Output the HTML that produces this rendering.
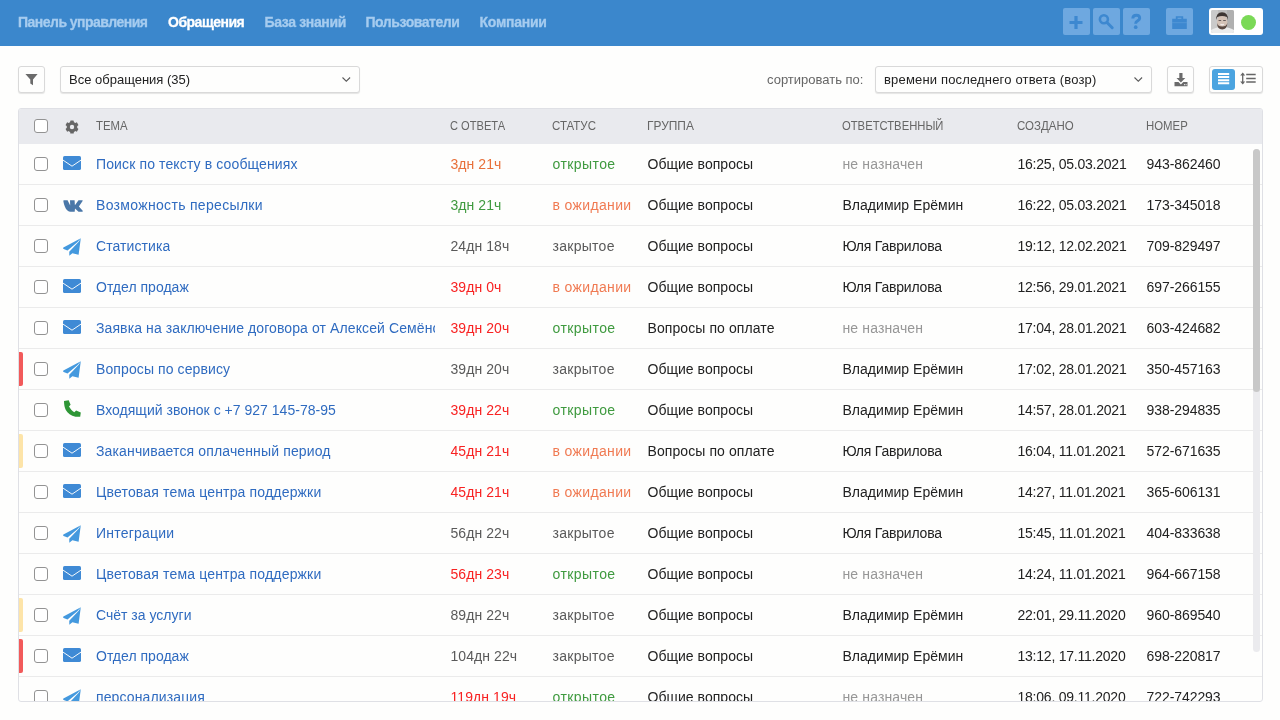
<!DOCTYPE html>
<html><head><meta charset="utf-8">
<style>
*{box-sizing:border-box;margin:0;padding:0}
html,body{width:1280px;height:720px;overflow:hidden;background:#fefefd;font-family:"Liberation Sans",sans-serif;color:#333}
.nav{position:absolute;left:0;top:0;width:1280px;height:46px;background:#3b87cc}
.nav a{position:absolute;top:14px;font-weight:bold;font-size:14px;color:#a6ccef;-webkit-text-stroke:0.3px currentColor;text-decoration:none;white-space:nowrap;line-height:16px;letter-spacing:-0.35px}
.nav a.act{color:#fff}
.nbtn{position:absolute;top:8px;width:27px;height:27px;border-radius:2px;background:#6ea8e0}
.nbtn svg{position:absolute;left:0;top:0}
.avbox{position:absolute;left:1209px;top:8px;width:54px;height:27px;background:#fff;border-radius:3px}
.tb{position:absolute;top:66px;height:27px;border:1px solid #d9d9d9;border-radius:3px;background:#fefefd;box-shadow:0 1px 1px rgba(0,0,0,.10)}
.sel{font-size:13px;color:#222;line-height:25px;padding-left:8px;white-space:nowrap}
.tb svg{position:absolute}
.tbl{position:absolute;left:18px;top:108px;width:1245px;height:594px;border:1px solid #dfe0e5;border-radius:3px;overflow:hidden;background:#fefefd}
.th{position:absolute;left:0;top:0;width:1245px;height:35px;background:#e9eaee}
.th span{position:absolute;top:10px;font-size:12.5px;color:#666;line-height:14px;white-space:nowrap;transform:scaleX(0.91);transform-origin:0 0}
.row{position:absolute;left:0;width:1243px;height:41px;border-bottom:1px solid #ebebeb}
.row span{position:absolute;top:12px;font-size:14px;line-height:16px;white-space:nowrap}
.cb{position:absolute;left:15px;width:14px;height:14px;border:1.5px solid #939393;border-radius:3px;background:#fff}
.row .cb{top:13px}
.ic{position:absolute}
.t{left:77px;color:#2f6bc0;max-width:339px;overflow:hidden}
.mk{position:absolute;left:0;top:3px;width:4px;height:34px;border-radius:0 2px 2px 0}
.mk.red{background:#f25a5a}
.mk.yel{background:#fde4a8}
.scr{position:absolute;left:1234px;top:40px;width:7px;height:243px;border-radius:3.5px;background:#c8c8c8}
body>div{will-change:transform}
</style></head><body>
<div class="nav">
<a style="left:18px;letter-spacing:-0.52px">Панель управления</a>
<a class="act" style="left:168px;letter-spacing:-0.5px">Обращения</a>
<a style="left:264.5px">База знаний</a>
<a style="left:365.5px;letter-spacing:-0.45px">Пользователи</a>
<a style="left:479.5px;letter-spacing:-0.25px">Компании</a>
<div class="nbtn" style="left:1063px"><svg width="27" height="27" viewBox="0 0 27 27"><path fill="#3d88d0" d="M11.4 8h3.2v13h-3.2z M6.5 12.9h13v3.2h-13z"/></svg></div>
<div class="nbtn" style="left:1093px"><svg width="27" height="27" viewBox="0 0 27 27"><circle cx="10.9" cy="11.3" r="4" fill="none" stroke="#3d88d0" stroke-width="2.6"/><path d="M14 14.5l5.2 5.2" stroke="#3d88d0" stroke-width="3" stroke-linecap="round"/></svg></div>
<div class="nbtn" style="left:1123px"><svg width="27" height="27" viewBox="0 0 27 27"><path fill="none" stroke="#3d88d0" stroke-width="2.9" d="M9.8 10.6c0-2.1 1.5-3.3 3.5-3.3 2.1 0 3.4 1.2 3.4 2.9 0 2.4-4 2.6-4 5.1v.5"/><circle cx="12.7" cy="19.2" r="1.85" fill="#3d88d0"/></svg></div>
<div class="nbtn" style="left:1166px"><svg width="27" height="27" viewBox="0 0 27 27"><path fill="#3d88d0" d="M9.8 8.2h7.4v2.6h-1.8v-1h-3.8v1H9.8z M6.2 10.8h14.6v10.1H6.2z"/><rect x="6.2" y="14.5" width="14.6" height="0.6" fill="#6ea8e0" opacity="0.7"/></svg></div>
<div class="avbox"><svg style="position:absolute;left:2px;top:2px" width="23" height="23" viewBox="0 0 23 23"><defs><clipPath id="avc"><rect width="23" height="23" rx="2"/></clipPath><filter id="bl" x="-10%" y="-10%" width="120%" height="120%"><feGaussianBlur stdDeviation="0.55"/></filter></defs><g clip-path="url(#avc)"><rect width="23" height="23" fill="#bdbdbd"/><g filter="url(#bl)"><rect x="-2" y="-2" width="9" height="27" fill="#cacaca"/><rect x="16" y="-2" width="9" height="27" fill="#b0b0b0"/><path d="M-2 25 L0 20 Q5 17 11.5 17 Q18 17 23 20 L25 25Z" fill="#ececec"/><ellipse cx="11.2" cy="12" rx="5.2" ry="6.8" fill="#d4c2b6"/><path d="M5.2 10 Q5 2.5 11 2.3 Q17.2 2.5 17 10 L16 7 Q11 5 6.3 7Z" fill="#3e3430"/><path d="M6 13 Q6.3 19.5 11.2 19.5 Q16 19.5 16.4 13 Q15.5 16.5 11.2 16.5 Q7 16.5 6 13Z" fill="#5a4a42"/><path d="M7.6 10.5h2.6M12.2 10.5h2.6" stroke="#5a5050" stroke-width="0.9"/><path d="M9.5 14.3 Q11.2 15.4 12.9 14.3" stroke="#f4eeee" stroke-width="1.1" fill="none"/></g></g></svg><div style="position:absolute;left:32px;top:6.5px;width:15px;height:15px;border-radius:50%;background:#7ad956"></div></div></div>
</div>
<div class="tb" style="left:18px;width:27px"><svg style="left:6px;top:6px" width="13" height="13" viewBox="0 0 13 13"><path fill="#6b6b6b" d="M0.4 1h12.2L8 6.6v5.6L5.3 10.6V6.6z"/></svg></div>
<div class="tb sel" style="left:60px;width:300px">Все обращения (35)<svg style="left:281px;top:10px" width="9" height="6" viewBox="0 0 9 6"><path d="M0.5 0.5l3.8 3.7 3.8-3.7" fill="none" stroke="#5a5a5a" stroke-width="1.05"/></svg></div>
<div style="position:absolute;left:767px;top:72px;font-size:13px;color:#666;line-height:15px">сортировать по:</div>
<div class="tb sel" style="left:875px;width:277px;letter-spacing:0.17px">времени последнего ответа (возр)<svg style="left:258px;top:10px" width="9" height="6" viewBox="0 0 9 6"><path d="M0.5 0.5l3.8 3.7 3.8-3.7" fill="none" stroke="#5a5a5a" stroke-width="1.05"/></svg></div>
<div class="tb" style="left:1167px;width:27px"><svg style="left:5px;top:5px" width="16" height="15" viewBox="0 0 16 15"><path fill="#6b6b6b" d="M6.3 1h3.2v5h2.8L7.9 10.4 3.5 6h2.8z M1.5 10h4l2.4 2.4L10.3 10h4.2v4.2h-13z"/><rect x="11" y="12.2" width="1" height="1" fill="#fff"/><rect x="12.6" y="12.2" width="1" height="1" fill="#fff"/></svg></div>
<div class="tb" style="left:1209px;width:54px"><div style="position:absolute;left:2px;top:2px;width:23px;height:21px;border-radius:3px;background:#4ba4e0"></div><svg style="left:8px;top:6px" width="12" height="12" viewBox="0 0 12 12"><path d="M0 1h11.2M0 4.1h11.2M0 7.2h11.2M0 10.2h11.2" stroke="#fff" stroke-width="2"/></svg><svg style="left:30px;top:5px" width="18" height="14" viewBox="0 0 18 14"><path d="M6.2 2.5h9.5M6.2 6.4h9.5M6.2 10.1h9.5" stroke="#666" stroke-width="1.5"/><path d="M2.7 1.5v10" stroke="#666" stroke-width="1.3"/><path d="M0.2 3.6L2.7 0.4l2.5 3.2zM0.2 9.4L2.7 12.6l2.5-3.2z" fill="#666"/></svg></div>
<div class="tbl">
<div class="th">
<div class="cb" style="top:10px"></div>
<svg class="ic" style="left:46px;top:11px" width="14" height="14" viewBox="0 0 14 14"><g fill="#666" transform="translate(7 7)"><rect x="-1.8" y="-6.6" width="3.6" height="13.2" rx="0.7"/><rect x="-1.8" y="-6.6" width="3.6" height="13.2" rx="0.7" transform="rotate(60)"/><rect x="-1.8" y="-6.6" width="3.6" height="13.2" rx="0.7" transform="rotate(120)"/><circle r="5.3"/><circle r="2.2" fill="#e9eaee"/></g></svg>
<span style="left:77px">ТЕМА</span>
<span style="left:431px;transform:scaleX(0.888)">С ОТВЕТА</span>
<span style="left:533px;transform:scaleX(0.92)">СТАТУС</span>
<span style="left:628px;transform:scaleX(0.955)">ГРУППА</span>
<span style="left:823px;transform:scaleX(0.9)">ОТВЕТСТВЕННЫЙ</span>
<span style="left:998px;transform:scaleX(0.92)">СОЗДАНО</span>
<span style="left:1127px">НОМЕР</span>
</div>
<div class="row" style="top:35px"><div class="cb"></div><svg class="ic" style="left:44px;top:12px" width="18" height="14" viewBox="0 0 18 14"><rect width="18" height="14" rx="1.6" fill="#3f8ad5"/><path d="M0 4.1L9 10.2 18 4.1" fill="none" stroke="#fefefd" stroke-width="0.95"/></svg><span class="t" style="letter-spacing:0.126px">Поиск по тексту в сообщениях</span><span style="left:431.5px;letter-spacing:0.07px;color:#e8703a">3дн 21ч</span><span style="left:533.5px;letter-spacing:0.42px;color:#3f9a3f">открытое</span><span style="left:628.5px;letter-spacing:0.03px;color:#222">Общие вопросы</span><span style="left:823.5px;letter-spacing:0.13px;color:#979797">не назначен</span><span style="left:998.5px;letter-spacing:-0.23px;color:#222">16:25, 05.03.2021</span><span style="left:1127.5px;letter-spacing:-0.07px;color:#222">943-862460</span></div>
<div class="row" style="top:76px"><div class="cb"></div><svg class="ic" style="left:44px;top:15px" width="20" height="12" viewBox="0 0 20 12"><path fill="#4a77a8" d="M0.3 0.8Q0.3 0.2 1 0.2L4.6 0.2L7.2 5.6L7 0.2L11.6 0.2L11.9 5.2L15.5 0.2L19.3 0.2Q19.9 0.3 19.6 1L15.9 6.4L19.7 10.8Q20.1 11.7 19.2 11.7L15.5 11.7L12 8.6L11.7 11.7L7.4 11.7C3.6 11.5 1.3 7 0.3 0.8Z"/></svg><span class="t" style="letter-spacing:0.32px">Возможность пересылки</span><span style="left:431.5px;letter-spacing:0.07px;color:#3f9a3f">3дн 21ч</span><span style="left:533.5px;letter-spacing:0.35px;color:#f07a52">в ожидании</span><span style="left:628.5px;letter-spacing:0.03px;color:#222">Общие вопросы</span><span style="left:823.5px;letter-spacing:0.02px;color:#222">Владимир Ерёмин</span><span style="left:998.5px;letter-spacing:-0.23px;color:#222">16:22, 05.03.2021</span><span style="left:1127.5px;letter-spacing:-0.07px;color:#222">173-345018</span></div>
<div class="row" style="top:117px"><div class="cb"></div><svg class="ic" style="left:44px;top:12px" width="18" height="18" viewBox="0 0 18 18"><path fill="#4499de" d="M17.8 0.25L0.4 9.6Q-0.2 10.4 0.6 11L4.5 12.4L14.6 4ZM17.8 0.25L15.6 16.7L9.4 15.25L6.3 17.8L6.25 13.8L15.7 3.7Z"/></svg><span class="t" style="letter-spacing:0.089px">Статистика</span><span style="left:431.5px;letter-spacing:0.07px;color:#5a5a5a">24дн 18ч</span><span style="left:533.5px;letter-spacing:0.28px;color:#5a5a5a">закрытое</span><span style="left:628.5px;letter-spacing:0.03px;color:#222">Общие вопросы</span><span style="left:823.5px;letter-spacing:-0.2px;color:#222">Юля Гаврилова</span><span style="left:998.5px;letter-spacing:-0.23px;color:#222">19:12, 12.02.2021</span><span style="left:1127.5px;letter-spacing:-0.07px;color:#222">709-829497</span></div>
<div class="row" style="top:158px"><div class="cb"></div><svg class="ic" style="left:44px;top:12px" width="18" height="14" viewBox="0 0 18 14"><rect width="18" height="14" rx="1.6" fill="#3f8ad5"/><path d="M0 4.1L9 10.2 18 4.1" fill="none" stroke="#fefefd" stroke-width="0.95"/></svg><span class="t" style="letter-spacing:0.019px">Отдел продаж</span><span style="left:431.5px;letter-spacing:0.07px;color:#f82222">39дн 0ч</span><span style="left:533.5px;letter-spacing:0.35px;color:#f07a52">в ожидании</span><span style="left:628.5px;letter-spacing:0.03px;color:#222">Общие вопросы</span><span style="left:823.5px;letter-spacing:-0.2px;color:#222">Юля Гаврилова</span><span style="left:998.5px;letter-spacing:-0.23px;color:#222">12:56, 29.01.2021</span><span style="left:1127.5px;letter-spacing:-0.07px;color:#222">697-266155</span></div>
<div class="row" style="top:199px"><div class="cb"></div><svg class="ic" style="left:44px;top:12px" width="18" height="14" viewBox="0 0 18 14"><rect width="18" height="14" rx="1.6" fill="#3f8ad5"/><path d="M0 4.1L9 10.2 18 4.1" fill="none" stroke="#fefefd" stroke-width="0.95"/></svg><span class="t" style="letter-spacing:0.1px">Заявка на заключение договора от Алексей Семёнов</span><span style="left:431.5px;letter-spacing:0.07px;color:#f82222">39дн 20ч</span><span style="left:533.5px;letter-spacing:0.42px;color:#3f9a3f">открытое</span><span style="left:628.5px;letter-spacing:0.09px;color:#222">Вопросы по оплате</span><span style="left:823.5px;letter-spacing:0.13px;color:#979797">не назначен</span><span style="left:998.5px;letter-spacing:-0.23px;color:#222">17:04, 28.01.2021</span><span style="left:1127.5px;letter-spacing:-0.07px;color:#222">603-424682</span></div>
<div class="row" style="top:240px"><div class="mk red"></div><div class="cb"></div><svg class="ic" style="left:44px;top:12px" width="18" height="18" viewBox="0 0 18 18"><path fill="#4499de" d="M17.8 0.25L0.4 9.6Q-0.2 10.4 0.6 11L4.5 12.4L14.6 4ZM17.8 0.25L15.6 16.7L9.4 15.25L6.3 17.8L6.25 13.8L15.7 3.7Z"/></svg><span class="t" style="letter-spacing:0.1px">Вопросы по сервису</span><span style="left:431.5px;letter-spacing:0.07px;color:#5a5a5a">39дн 20ч</span><span style="left:533.5px;letter-spacing:0.28px;color:#5a5a5a">закрытое</span><span style="left:628.5px;letter-spacing:0.03px;color:#222">Общие вопросы</span><span style="left:823.5px;letter-spacing:0.02px;color:#222">Владимир Ерёмин</span><span style="left:998.5px;letter-spacing:-0.23px;color:#222">17:02, 28.01.2021</span><span style="left:1127.5px;letter-spacing:-0.07px;color:#222">350-457163</span></div>
<div class="row" style="top:281px"><div class="cb"></div><svg class="ic" style="left:44px;top:10px" width="18" height="18" viewBox="0 0 18 18"><path fill="#2e9636" d="M1 1L5.7 0.2L7.6 4.8L6 6.6C7.5 9.3 9.3 11.2 11.3 12.3L13.1 10.4L17.8 12.5L17.2 16.8L12.5 16.8C8 15.9 4.6 13.3 2.8 10C1.6 7.5 1 4.5 1 1Z"/></svg><span class="t" style="letter-spacing:0.02px">Входящий звонок с +7 927 145-78-95</span><span style="left:431.5px;letter-spacing:0.07px;color:#f82222">39дн 22ч</span><span style="left:533.5px;letter-spacing:0.42px;color:#3f9a3f">открытое</span><span style="left:628.5px;letter-spacing:0.03px;color:#222">Общие вопросы</span><span style="left:823.5px;letter-spacing:0.02px;color:#222">Владимир Ерёмин</span><span style="left:998.5px;letter-spacing:-0.23px;color:#222">14:57, 28.01.2021</span><span style="left:1127.5px;letter-spacing:-0.07px;color:#222">938-294835</span></div>
<div class="row" style="top:322px"><div class="mk yel"></div><div class="cb"></div><svg class="ic" style="left:44px;top:12px" width="18" height="14" viewBox="0 0 18 14"><rect width="18" height="14" rx="1.6" fill="#3f8ad5"/><path d="M0 4.1L9 10.2 18 4.1" fill="none" stroke="#fefefd" stroke-width="0.95"/></svg><span class="t" style="letter-spacing:0.137px">Заканчивается оплаченный период</span><span style="left:431.5px;letter-spacing:0.07px;color:#f82222">45дн 21ч</span><span style="left:533.5px;letter-spacing:0.35px;color:#f07a52">в ожидании</span><span style="left:628.5px;letter-spacing:0.09px;color:#222">Вопросы по оплате</span><span style="left:823.5px;letter-spacing:-0.2px;color:#222">Юля Гаврилова</span><span style="left:998.5px;letter-spacing:-0.23px;color:#222">16:04, 11.01.2021</span><span style="left:1127.5px;letter-spacing:-0.07px;color:#222">572-671635</span></div>
<div class="row" style="top:363px"><div class="cb"></div><svg class="ic" style="left:44px;top:12px" width="18" height="14" viewBox="0 0 18 14"><rect width="18" height="14" rx="1.6" fill="#3f8ad5"/><path d="M0 4.1L9 10.2 18 4.1" fill="none" stroke="#fefefd" stroke-width="0.95"/></svg><span class="t" style="letter-spacing:0.166px">Цветовая тема центра поддержки</span><span style="left:431.5px;letter-spacing:0.07px;color:#f82222">45дн 21ч</span><span style="left:533.5px;letter-spacing:0.35px;color:#f07a52">в ожидании</span><span style="left:628.5px;letter-spacing:0.03px;color:#222">Общие вопросы</span><span style="left:823.5px;letter-spacing:0.02px;color:#222">Владимир Ерёмин</span><span style="left:998.5px;letter-spacing:-0.23px;color:#222">14:27, 11.01.2021</span><span style="left:1127.5px;letter-spacing:-0.07px;color:#222">365-606131</span></div>
<div class="row" style="top:404px"><div class="cb"></div><svg class="ic" style="left:44px;top:12px" width="18" height="18" viewBox="0 0 18 18"><path fill="#4499de" d="M17.8 0.25L0.4 9.6Q-0.2 10.4 0.6 11L4.5 12.4L14.6 4ZM17.8 0.25L15.6 16.7L9.4 15.25L6.3 17.8L6.25 13.8L15.7 3.7Z"/></svg><span class="t" style="letter-spacing:0.219px">Интеграции</span><span style="left:431.5px;letter-spacing:0.07px;color:#5a5a5a">56дн 22ч</span><span style="left:533.5px;letter-spacing:0.28px;color:#5a5a5a">закрытое</span><span style="left:628.5px;letter-spacing:0.03px;color:#222">Общие вопросы</span><span style="left:823.5px;letter-spacing:-0.2px;color:#222">Юля Гаврилова</span><span style="left:998.5px;letter-spacing:-0.23px;color:#222">15:45, 11.01.2021</span><span style="left:1127.5px;letter-spacing:-0.07px;color:#222">404-833638</span></div>
<div class="row" style="top:445px"><div class="cb"></div><svg class="ic" style="left:44px;top:12px" width="18" height="14" viewBox="0 0 18 14"><rect width="18" height="14" rx="1.6" fill="#3f8ad5"/><path d="M0 4.1L9 10.2 18 4.1" fill="none" stroke="#fefefd" stroke-width="0.95"/></svg><span class="t" style="letter-spacing:0.166px">Цветовая тема центра поддержки</span><span style="left:431.5px;letter-spacing:0.07px;color:#f82222">56дн 23ч</span><span style="left:533.5px;letter-spacing:0.42px;color:#3f9a3f">открытое</span><span style="left:628.5px;letter-spacing:0.03px;color:#222">Общие вопросы</span><span style="left:823.5px;letter-spacing:0.13px;color:#979797">не назначен</span><span style="left:998.5px;letter-spacing:-0.23px;color:#222">14:24, 11.01.2021</span><span style="left:1127.5px;letter-spacing:-0.07px;color:#222">964-667158</span></div>
<div class="row" style="top:486px"><div class="mk yel"></div><div class="cb"></div><svg class="ic" style="left:44px;top:12px" width="18" height="18" viewBox="0 0 18 18"><path fill="#4499de" d="M17.8 0.25L0.4 9.6Q-0.2 10.4 0.6 11L4.5 12.4L14.6 4ZM17.8 0.25L15.6 16.7L9.4 15.25L6.3 17.8L6.25 13.8L15.7 3.7Z"/></svg><span class="t" style="letter-spacing:0.008px">Счёт за услуги</span><span style="left:431.5px;letter-spacing:0.07px;color:#5a5a5a">89дн 22ч</span><span style="left:533.5px;letter-spacing:0.28px;color:#5a5a5a">закрытое</span><span style="left:628.5px;letter-spacing:0.03px;color:#222">Общие вопросы</span><span style="left:823.5px;letter-spacing:0.02px;color:#222">Владимир Ерёмин</span><span style="left:998.5px;letter-spacing:-0.23px;color:#222">22:01, 29.11.2020</span><span style="left:1127.5px;letter-spacing:-0.07px;color:#222">960-869540</span></div>
<div class="row" style="top:527px"><div class="mk red"></div><div class="cb"></div><svg class="ic" style="left:44px;top:12px" width="18" height="14" viewBox="0 0 18 14"><rect width="18" height="14" rx="1.6" fill="#3f8ad5"/><path d="M0 4.1L9 10.2 18 4.1" fill="none" stroke="#fefefd" stroke-width="0.95"/></svg><span class="t" style="letter-spacing:0.019px">Отдел продаж</span><span style="left:431.5px;letter-spacing:0.07px;color:#5a5a5a">104дн 22ч</span><span style="left:533.5px;letter-spacing:0.28px;color:#5a5a5a">закрытое</span><span style="left:628.5px;letter-spacing:0.03px;color:#222">Общие вопросы</span><span style="left:823.5px;letter-spacing:0.02px;color:#222">Владимир Ерёмин</span><span style="left:998.5px;letter-spacing:-0.23px;color:#222">13:12, 17.11.2020</span><span style="left:1127.5px;letter-spacing:-0.07px;color:#222">698-220817</span></div>
<div class="row" style="top:568px"><div class="cb"></div><svg class="ic" style="left:44px;top:12px" width="18" height="18" viewBox="0 0 18 18"><path fill="#4499de" d="M17.8 0.25L0.4 9.6Q-0.2 10.4 0.6 11L4.5 12.4L14.6 4ZM17.8 0.25L15.6 16.7L9.4 15.25L6.3 17.8L6.25 13.8L15.7 3.7Z"/></svg><span class="t" style="letter-spacing:0.123px">персонализация</span><span style="left:431.5px;letter-spacing:0.07px;color:#f82222">119дн 19ч</span><span style="left:533.5px;letter-spacing:0.42px;color:#3f9a3f">открытое</span><span style="left:628.5px;letter-spacing:0.03px;color:#222">Общие вопросы</span><span style="left:823.5px;letter-spacing:0.13px;color:#979797">не назначен</span><span style="left:998.5px;letter-spacing:-0.23px;color:#222">18:06, 09.11.2020</span><span style="left:1127.5px;letter-spacing:-0.07px;color:#222">722-742293</span></div>
<div class="scr" style="height:503px;background:#ebebee"></div><div class="scr"></div>
</div>
</body></html>
